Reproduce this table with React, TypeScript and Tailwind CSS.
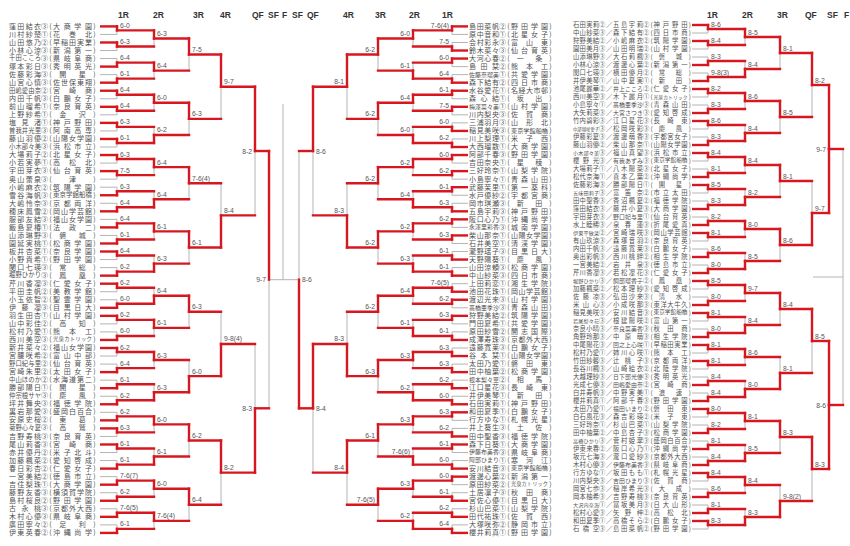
import React from "react";

type Res = [0 | 1, string];
type Mode = "above" | "side";
type Seg = { x1: number; y1: number; x2: number; y2: number; red: boolean };
type Lbl = { x: number; y: number; t: string; anchor: "start" | "end" };

const RED = "#d7171f";
const GREY = "#b4b4b4";

// 女子シングルス 左ブロック
const leftNames = [
  "窪田結衣③（大商学園）", "川村紗楚①（花巻北）", "山田悠乃②（早稲田実業）", "小林心涼③（新潟第一）",
  "千田こころ③（県岐阜商）", "塚本彩日③（秀明英光）", "佐藤彩海③（開星）", "山宮心慎③（佐世保東翔）",
  "田嶋愛由奈②（宮崎商）", "内田千帆③（白鵬女子）", "前山瑠希①（奈良育英）", "上野紗希①（金沢）",
  "塩見渚①（神戸野田）", "曽我井光里③（阿南高専）", "藤山羽優②（山陽女学園）", "小木部々美③（浜松市立）",
  "大場莉子②（北星女子）", "小若実夢①（高松北）", "宇田芽衣③（仙台育英）", "奥山蕾泉③（津）",
  "小嶋麻衣②（筑陽学園）", "雪谷海帆③（東京学館船橋）", "大嶋怜奈③（京都両洋）", "穂床鳳雪②（岡山学芸館）",
  "服部友結③（福山女学園）", "飯島夏椿①（法政二）", "山添琳野③（磐城）", "園延実桃①（松商学園）",
  "板井杏菜①（奈良学園）", "小野貴希①（野田学園）", "関口七瑛③（常総）", "堀野ひかり③（鳳凰）",
  "芹川香凜③（仁愛女子）", "平田圭帆②（美教学館）", "小玉依智②（聖霊学園）", "伊藤凜③（目黒日大）",
  "羽生田杏①（山村学園）", "山中彩佳②（高知）", "松村乃愛①（熊本工）", "西川美空③（光泉カトリック）",
  "新井菜々②（福山女学園）", "宮腰咲希②（富山中部）", "野口紀与里②（仙台育英）", "宮崎朱里②（太田女子）",
  "中山ほのか②（水海道第二）", "勝部陽日①（開星）", "仲宗根サヤ③（慶風）", "坪井舞央③（福徳学院）",
  "裏岩那愛③（盛岡白百合）", "安原史桜②（東葛）", "菊野心々夏③（高鷲）", "吉野寿桃③（奈良育英）",
  "尾山莉香③（宮崎商）", "赤井優丹②（米子北斗）", "加藤楓菜②（愛知啓成）", "春日彩杏②（仁愛女子）",
  "一宮美結②（徳島市立）", "吉住梨珠①（大商学園）", "藤野友香③（横須賀学院）", "島村桜良②（野田学園）",
  "古永桃③（京都外大西）", "木村心優③（県岐阜商）", "廣田寧々②（足利）", "伊東英春②（沖縄尚学）",
];

const leftRounds = [
  ["6-0", "6-3", "_6-4", "_6-1", "6-4", "6-4", "6-3", "6-1", "6-3", "7-5", "_6-3", "_6-4", "_6-4", "_6-1", "6-4", "_6-2",
    "6-2", "_6-0", "6-2", "_6-0", "6-2", "_6-4", "_6-1", "_6-2", "_6-2", "6-3", "6-1", "_6-1", "_7-6(7)", "_6-2", "_7-6(5)", "_6-1"],
  ["6-3", "6-4", "6-0", "_6-2", "6-4", "_6-4", "6-1", "_6-3", "_6-4", "6-1", "6-3", "_6-3", "6-0", "_6-1", "6-0", "7-6(4)"],
  ["7-5", "6-3", "7-6(4)", "6-1", "6-3", "_6-0", "6-2", "6-4"],
  ["9-7", "_8-4", "_9-8(4)", "8-2"],
  ["8-2", "_8-3"],
  ["9-7"],
];

// 女子シングルス 右ブロック（中央）
const midNames = [
  "島田菜帆②（野田学園）", "原中音和①（北星女子）", "会村彩永③（富山東）", "鈴木菜々③（仙台育英）",
  "大河心春②（一条）", "島田栞②（熊本工）", "佐藤奈瑠美①（共愛学園）", "森下結有②（四日市商）",
  "水谷愛花①（名経大市邨）", "森心結①（坂出）", "梅澤菜々美①（山村学園）", "川内梨央③（佐賀商）",
  "三浦羽月③（山形北）", "稲見美咲③（東京学館船橋）", "川上梨理①（米子西）", "大西瑠数①（大商学園）",
  "阿部千春③（野田学園）", "吉田奈央①（星稜）", "三好玲奈①（山梨学院）", "小島寧々①（青森山田）",
  "武藤茉里①（第一薬科）", "水戸優紗②（宇都宮商）", "岡市琪瀬③（新田）", "五島宇莉③（神戸野田）",
  "阪口心乃①（沖縄尚学）", "永澤里彩香③（城南学園）", "柴山那奈①（山陽女学園）", "石井美空①（清渓学園）",
  "瀧野瑶子③（目黒日大）", "天野陽葵①（慶風）", "山田涼頼③（松商学園）", "中山紗菜③（四日市商）",
  "上田莉恋①（湘生学院）", "池田花珠①（岡山学芸館）", "渡辺光来③（山村学園）", "髙橋亜季沙③（青森山田）",
  "狩野美結②（筑陽学園）", "門田夏希①（共愛学園）", "原田紗雪②（開志国際）", "成澤寿珠③（京都外大西）",
  "遠藤寛莱③（白鵬女子）", "谷本栞①（山陽女学園）", "太田乃愛①（磐田東）", "田中柚葉②（松商学園）",
  "根本梨々華②（相馬）", "江口星花③（長崎東）", "井伊美琴①（新田）", "石田実莉①（神戸野田）",
  "和田夏季①（白鵬女子）", "行方ゆな①（札幌光星）", "井上葵生③（土佐）", "田中聖香③（福徳学院）",
  "森下日葵①（大商学園）", "伊藤布美香③（県岐阜商）", "阿部ひまり①（寒河江）", "安川結音③（東京学館船橋）",
  "渡邊心葉②（新潟第一）", "原田紗菜②（光泉カトリック）", "土居凛子③（秋田商）", "宮佐心優①（目黒日大）",
  "杉山巴菜①（山梨学院）", "田代祐珠①（佐賀西）", "大塚咲弥②（静岡市立）", "櫻井莉真①（野田学園）",
];

const midRounds = [
  ["7-6(4)", "_7-5", "6-0", "_6-4", "6-1", "7-5", "_6-0", "_6-2", "6-0", "6-2", "6-1", "_6-3", "6-2", "6-3", "_6-1", "_6-1",
    "_7-6(5)", "6-2", "6-3", "_6-1", "_6-3", "_6-3", "_6-2", "_6-0", "6-3", "_6-2", "6-1", "_6-0", "6-0", "_6-1", "_6-2", "_6-4"],
  ["6-0", "_6-1", "6-4", "_6-0", "6-2", "_6-4", "6-2", "_6-3", "6-4", "_6-1", "6-3", "_6-2", "6-3", "_7-6(6)", "6-3", "_6-2"],
  ["6-2", "6-2", "6-2", "6-2", "6-2", "6-3", "6-1", "7-6(5)"],
  ["8-1", "_8-3", "_8-3", "8-4"],
  ["8-6", "8-4"],
  ["_8-6"],
];

// 女子ダブルス
const dblNames = [
  "石田実莉②／五島宇莉②（神戸野田）", "中山紗菜③／森下結有②（四日市商）", "狩野美結②／小嶋麻衣②（筑陽学園）", "園田美月③／山田明瑞②（山村学園）",
  "山添琳野③／大石莉楓③（磐城）", "小林心涼③／渡邊心葉②（新潟第一）", "関口七瑛③／横田優月②（常総）", "井伊美琴①／山中夏実①（新田）",
  "池尾麗華②／井上こころ②（仁愛女子）", "西川美空③／木下麗月①（光泉カトリック）", "小島寧々①／髙橋亜季沙③（青森山田）", "大矢莉菜③／大宮さつき③（愛知啓成）",
  "竹内碧彩③／江口星花③（長崎東）", "中部瑚咲愛子③／松岡咲彩③（慶風）", "伊藤彩夏③／渡邊萌香③（宇都宮女子）", "藤山羽優②／柴山那奈①（山陽女学園）",
  "小木部々美③／福山真望③（浜松市立）", "櫻野光③／有我あずみ③（東京学館船橋）", "大場莉子①／八木陽菜③（北星女子）", "松代奈海①／喜本乙葉②（沖縄尚学）",
  "佐藤彩海③／勝部陽日①（開星）", "五味田莉子③／富笛奈②（市立太田）", "田中聖香③／香沼楓夏②（福徳学院）", "窪田結衣③／藤井小夏③（大商学園）",
  "宇田芽衣③／野口妃与里①（仙台育英）", "水上睦稀③／泉春蓮③（折尾愛真）", "伊東平敏菜②／宮崎瑞咲③（岡山学芸館）", "有山玖涼③／森塚音羽②（奈良育英）",
  "内田千帆③／遠藤寛莱③（白鵬女子）", "奥出彩帆③／西川桃絆②（相生学院）", "一宮美結②／岩井泉③（徳島市立）", "芹川香凜③／若松凜花③（仁愛女子）",
  "堀野ひかり③／飼部瑠香子②（鳳凰）", "加藤楓菜②／松本理紗③（愛知啓成）", "佐藤凉③／弘田沙来③（清水）", "米山心③／小成咲那③（東洋大牛久）",
  "稲見美咲③／安川結音③（東京学館船橋）", "若尾梨々花③／根建陽咲②（富山第一）", "奈良小晴③／奈良菜美香③（秋田商）", "角野玲那③／中原萌③（相生学院）",
  "中尾陽花③／回之上心咲①（早稲田実業）", "松村乃愛①／姉川心咲①（熊本工）", "竹田紗馨③／辻桃子③（京都両洋）", "長谷川楓③／山崎絵衣②（北陸学院）",
  "大越理紗③／日下部光優③（秀明英光）", "光成七優③／田嶋愛由奈②（宮崎商）", "白井寿帆③／中野実美①（浪速）", "櫻井莉真①／阿部千春③（野田学園）",
  "太田乃愛①／福田いまり②（磐田東）", "白石風花③／森吉彩瑛②（米子東）", "三好玲奈①／杉山巴菜①（山梨学院）", "田中柚葉②／中島杏子③（松商学園）",
  "高橋ひかり③／菅村姫翠③（盛岡白百合）", "伊東来春②／阪口心乃①（沖縄尚学）", "坂元七海③／瀧口愛紗③（京都外大西）", "木村心優③／伊藤布美香③（県岐阜商）",
  "行方ゆな①／坂田もも①（札幌光星）", "川内梨央③／吉田ひまり③（佐賀商）", "岡宮七歩③／稲岸希光③（大成）", "岡本柚希③／吉野寿桃③（奈良育英）",
  "大沢内奈海①／冨坂美月③（日大山形）", "松村心愛③／矢野梓②（高松北）", "和田夏季①／高橋そら②（白鵬女子）", "石橋空③／島田菜帆②（野田学園）",
];

const dblRounds = [
  ["8-6", "8-4", "_8-3", "_9-8(3)", "8-2", "_8-3", "8-6", "_8-3", "8-4", "_8-1", "8-5", "_8-3", "_8-2", "8-1", "_8-6", "_8-0",
    "8-5", "_8-0", "8-1", "_8-0", "8-1", "8-1", "_8-4", "_8-4", "8-0", "_8-2", "_8-1", "_8-4", "8-4", "_8-6", "_8-1", "8-3"],
  ["8-5", "_8-4", "8-6", "_8-4", "8-4", "_8-2", "8-0", "_8-5", "9-7", "_8-4", "8-6", "_8-0", "8-1", "_8-5", "8-4", "_8-3"],
  ["8-1", "8-5", "8-1", "8-6", "8-4", "_8-1", "8-3", "_9-8(2)"],
  ["8-2", "_9-7", "8-5", "8-3"],
  ["_9-7", "8-6"],
];

const parse = (rs: string[][]): Res[][] =>
  rs.map((r) => r.map((s) => (s.startsWith("_") ? [1, s.slice(1)] : [0, s]) as Res));

function buildBracket(
  rounds: Res[][],
  y0: number,
  dy: number,
  xs: number[],
  modes: Mode[],
  allRed: boolean[] = []
) {
  const dir = xs[1] > xs[0] ? 1 : -1;
  const segs: Seg[] = [];
  const labels: Lbl[] = [];
  let ys = Array.from({ length: 64 }, (_, i) => y0 + dy * i);
  rounds.forEach((matches, r) => {
    const vx = xs[r + 1];
    const next: number[] = [];
    matches.forEach(([win, score], k) => {
      const a = ys[2 * k];
      const b = ys[2 * k + 1];
      const mid = (a + b) / 2;
      if (r === 0) {
        segs.push({ x1: xs[0], y1: a, x2: vx, y2: a, red: win === 0 });
        segs.push({ x1: xs[0], y1: b, x2: vx, y2: b, red: win === 1 });
      }
      const w = win === 0 ? a : b;
      const l = win === 0 ? b : a;
      segs.push({ x1: vx, y1: w, x2: vx, y2: mid, red: true });
      segs.push({ x1: vx, y1: mid, x2: vx, y2: l, red: !!allRed[r] });
      if (r + 2 < xs.length) segs.push({ x1: vx, y1: mid, x2: xs[r + 2], y2: mid, red: true });
      if (modes[r] === "above")
        labels.push({ x: vx + dir * 3, y: mid - 2.5, t: score, anchor: dir > 0 ? "start" : "end" });
      else labels.push({ x: vx - dir * 3, y: mid + 2.5, t: score, anchor: dir > 0 ? "end" : "start" });
      next.push(mid);
    });
    ys = next;
  });
  return { segs, labels };
}

const Lines = ({ segs }: { segs: Seg[] }) => (
  <>
    {segs.filter((s) => !s.red).map((s, i) => (
      <line key={"g" + i} x1={s.x1} y1={s.y1} x2={s.x2} y2={s.y2} stroke={GREY} strokeWidth={1} />
    ))}
    {segs.filter((s) => s.red).map((s, i) => (
      <line key={"r" + i} x1={s.x1} y1={s.y1} x2={s.x2} y2={s.y2} stroke={RED} strokeWidth={2.4} strokeLinecap="square" />
    ))}
  </>
);

const Scores = ({ labels }: { labels: Lbl[] }) => (
  <g fontFamily="'Liberation Sans', Arial, sans-serif" fontSize={6.8} fill="#555">
    {labels.map((l, i) => (
      <text key={i} x={l.x} y={l.y} textAnchor={l.anchor}>{l.t}</text>
    ))}
  </g>
);

const Heads = ({ items }: { items: [string, number][] }) => (
  <g fontFamily="'Liberation Sans', Arial, sans-serif" fontSize={8.5} fontWeight={700} fill="#333">
    {items.map(([t, x], i) => (
      <text key={i} x={x} y={18}>{t}</text>
    ))}
  </g>
);

// 文字を枠いっぱいに均等割り付け
const Just = ({ t, w, cls, fs }: { t: string; w: number; cls: string; fs: number }) => {
  const chars = Array.from(t);
  const size = Math.min(fs, (w - 0.5) / chars.length);
  return (
    <span
      className={`${cls} flex shrink-0 ${chars.length <= 2 ? "justify-around" : "justify-between"}`}
      style={{ fontSize: size }}
    >
      {chars.map((c, i) => (
        <span key={i}>{c}</span>
      ))}
    </span>
  );
};

const single = (s: string) => {
  const m = s.match(/^(.+?)([①-⑳])（(.+)）$/);
  return m ? [m[1], m[2], m[3]] : [s, "", ""];
};

const double = (s: string) => {
  const m = s.match(/^(.+?)([①-⑳])／(.+?)([①-⑳])（(.+)）$/);
  return m ? [m[1], m[2], m[3], m[4], m[5]] : [s, "", "", "", ""];
};

const LeftNames = () => (
  <div className="w-[100px] shrink-0 pt-[22.4px] flex flex-col">
    {leftNames.map((s, i) => {
      const [n, g, sc] = single(s);
      return (
        <div key={i} className="h-[8.04px] flex items-center pl-[9px]">
          <Just t={n} w={32} cls="w-[32px]" fs={7} />
          <span className="w-[7px] shrink-0">{g}</span>
          <span className="w-[5px] shrink-0 flex justify-center">(</span>
          <Just t={sc} w={39} cls="w-[39px]" fs={7} />
          <span className="w-[5px] shrink-0 flex justify-center">)</span>
        </div>
      );
    })}
  </div>
);

const MidNames = () => (
  <div className="w-[97px] shrink-0 pt-[22.4px] flex flex-col">
    {midNames.map((s, i) => {
      const [n, g, sc] = single(s);
      return (
        <div key={i} className="h-[8.04px] flex items-center pl-[1px]">
          <Just t={n} w={30} cls="w-[30px]" fs={7} />
          <span className="w-[7px] shrink-0">{g}</span>
          <span className="w-[5px] shrink-0 flex justify-center">(</span>
          <Just t={sc} w={37} cls="w-[37px]" fs={7} />
          <span className="w-[5px] shrink-0 flex justify-center">)</span>
        </div>
      );
    })}
  </div>
);

const DblNames = () => (
  <div className="w-[127px] shrink-0 pt-[21px] flex flex-col text-[6.3px]">
    {dblNames.map((s, i) => {
      const [n1, g1, n2, g2, sc] = double(s);
      return (
        <div key={i} className="h-[8px] flex items-center pl-[8px]">
          <Just t={n1} w={26} cls="w-[26px]" fs={6.3} />
          <span className="w-[6.5px] shrink-0">{g1}</span>
          <span className="w-[7.5px] shrink-0 flex justify-center">／</span>
          <Just t={n2} w={30} cls="w-[30px]" fs={6.3} />
          <span className="w-[6.5px] shrink-0">{g2}</span>
          <span className="w-[4px] shrink-0 flex justify-center">(</span>
          <Just t={sc} w={34} cls="w-[34px]" fs={6.3} />
          <span className="w-[4.5px] shrink-0 flex justify-center">)</span>
        </div>
      );
    })}
  </div>
);

export default function App() {
  const left = buildBracket(parse(leftRounds), 26.4, 8.04, [100, 117, 154, 189, 221, 255, 269],
    ["above", "above", "above", "above", "side", "side"]);
  const mid = buildBracket(parse(midRounds), 26.4, 8.04, [468, 452, 413, 378, 347, 313, 299],
    ["above", "above", "above", "above", "side", "side"]);
  const dbl = buildBracket(parse(dblRounds), 25, 8, [692, 708, 745, 780, 812, 829, 843],
    ["above", "above", "above", "above", "side"], [false, false, false, false, true]);

  return (
    <div className="w-[850px] h-[546px] bg-white flex overflow-hidden font-['Noto_Sans_CJK_JP',sans-serif] text-[7px] leading-none text-[#505050]">
      <LeftNames />
      <svg width={368} height={546} viewBox="100 0 368 546" className="block shrink-0">
        <Heads items={[["1R", 118], ["2R", 153], ["3R", 193], ["4R", 220], ["QF", 252], ["SF", 268], ["F", 282],
          ["SF", 292], ["QF", 307], ["4R", 343], ["3R", 375], ["2R", 409], ["1R", 442]]} />
        {/* 決勝 */}
        <line x1={269} y1={279.7} x2={299} y2={279.7} stroke={GREY} strokeWidth={1} />
        <line x1={283} y1={104} x2={283} y2={279.7} stroke={GREY} strokeWidth={1} />
        <Lines segs={[...left.segs, ...mid.segs]} />
        <Scores labels={[...left.labels, ...mid.labels]} />
      </svg>
      <MidNames />
      <DblNames />
      <svg width={158} height={546} viewBox="692 0 158 546" className="block shrink-0">
        <Heads items={[["1R", 707], ["2R", 742], ["3R", 777], ["QF", 805], ["SF", 827], ["F", 844]]} />
        <line x1={843} y1={149} x2={843} y2={405} stroke={GREY} strokeWidth={1} />
        <line x1={813} y1={277} x2={843} y2={277} stroke={GREY} strokeWidth={1} />
        <Lines segs={dbl.segs} />
        <Scores labels={dbl.labels} />
      </svg>
    </div>
  );
}
